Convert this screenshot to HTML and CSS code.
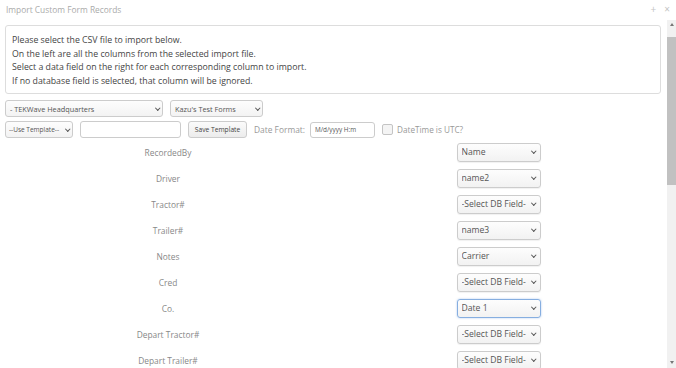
FILE: index.html
```html
<!DOCTYPE html>
<html lang="en">
<head>
  <meta charset="UTF-8" />
  <title>Import Custom Form Records</title>
  <link rel="stylesheet" href="styles.css">
</head>
<body>
  <div class="dialog">
    <div class="titlebar">
      <span class="title">Import Custom Form Records</span>
      <span class="tools"><span>+</span><span>×</span></span>
    </div>
    <div class="content">
      <div class="info">
        Please select the CSV file to import below.<br>
        On the left are all the columns from the selected import file.<br>
        Select a data field on the right for each corresponding column to import.<br>
        If no database field is selected, that column will be ignored.
      </div>
      <div class="toolbar">
        <span class="pick small"><select class="sel-small sel-company"><option>- TEKWave Headquarters</option></select></span>
        <span class="pick small"><select class="sel-small sel-forms"><option>Kazu's Test Forms</option></select></span>
      </div>
      <div class="toolbar">
        <span class="pick small"><select class="sel-small sel-template"><option>--Use Template--</option></select></span>
        <input class="tpl-name" type="text">
        <button class="btn">Save Template</button>
        <span class="fmt-label">Date Format:</span>
        <input class="date-fmt" type="text" value="M/d/yyyy H:m">
        <label class="utc"><span class="check"></span>DateTime is UTC?</label>
      </div>
      <div class="map">
        <div class="col-name">RecordedBy</div>
        <div class="col-field"><span class="pick"><select class="db-field"><option>Name</option></select></span></div>
        <div class="col-name">Driver</div>
        <div class="col-field"><span class="pick"><select class="db-field"><option>name2</option></select></span></div>
        <div class="col-name">Tractor#</div>
        <div class="col-field"><span class="pick"><select class="db-field"><option>-Select DB Field-</option></select></span></div>
        <div class="col-name">Trailer#</div>
        <div class="col-field"><span class="pick"><select class="db-field"><option>name3</option></select></span></div>
        <div class="col-name">Notes</div>
        <div class="col-field"><span class="pick"><select class="db-field"><option>Carrier</option></select></span></div>
        <div class="col-name">Cred</div>
        <div class="col-field"><span class="pick"><select class="db-field"><option>-Select DB Field-</option></select></span></div>
        <div class="col-name">Co.</div>
        <div class="col-field"><span class="pick"><select class="db-field focused"><option>Date 1</option></select></span></div>
        <div class="col-name">Depart Tractor#</div>
        <div class="col-field"><span class="pick"><select class="db-field"><option>-Select DB Field-</option></select></span></div>
        <div class="col-name">Depart Trailer#</div>
        <div class="col-field"><span class="pick"><select class="db-field"><option>-Select DB Field-</option></select></span></div>
      </div>
    </div>
    <div class="scrollbar">
      <span class="arrow up"></span>
      <span class="thumb"></span>
      <span class="arrow down"></span>
    </div>
  </div>
</body>
</html>
```

FILE: styles.css
```css
html, body {
  margin: 0;
  padding: 0;
  background: #fff;
}
body {
  font-family: 'Open Sans', 'Liberation Sans', sans-serif;
  color: #444;
}
.dialog {
  position: relative;
  width: 676px;
  height: 368px;
  overflow: hidden;
}
.titlebar {
  display: flex;
  justify-content: space-between;
  align-items: center;
  height: 18px;
  padding: 0 6px;
}
.title {
  font-size: 8.4px;
  color: #aaa;
}
.tools {
  display: flex;
  gap: 8px;
  font-size: 10px;
  color: #c4c4c4;
}
.content {
  height: 350px;
  overflow: hidden;
  padding: 7px 15px 0 5px;
  box-sizing: border-box;
}
.info {
  border: 1px solid #ddd;
  border-radius: 3px;
  padding: 8px 6px 5px;
  font-size: 8.75px;
  line-height: 13.5px;
  color: #444;
}
.toolbar {
  display: flex;
  align-items: center;
  gap: 7px;
  height: 17px;
  margin-top: 6px;
}
.toolbar + .toolbar {
  margin-top: 4px;
}
select, input, button {
  font-family: inherit;
  box-sizing: border-box;
  margin: 0;
}
select {
  appearance: none;
  -webkit-appearance: none;
  outline: none;
}
.pick {
  position: relative;
  display: inline-block;
}
.pick::after {
  content: "";
  position: absolute;
  right: 5px;
  top: 50%;
  width: 2.5px;
  height: 2.5px;
  margin-top: -3px;
  border-right: 1.3px solid #555;
  border-bottom: 1.3px solid #555;
  transform: rotate(45deg);
  pointer-events: none;
}
.pick.small::after {
  right: 4px;
  margin-top: -2.5px;
}
.sel-small {
  display: block;
  height: 17px;
  font-size: 7.3px;
  color: #555;
  border: 1px solid #ccc;
  border-radius: 3px;
  background: linear-gradient(#fdfdfd, #f3f3f3);
  padding: 0 4px;
}
.sel-company { width: 158px; }
.sel-forms { width: 93px; }
.sel-template {
  width: 68px;
  font-size: 6.5px;
  padding: 0 3px;
}
.tpl-name {
  width: 101px;
  height: 17px;
  border: 1px solid #ccc;
  border-radius: 3px;
}
.btn {
  height: 17px;
  width: 59px;
  padding: 0;
  font-size: 6.7px;
  color: #444;
  border: 1px solid #ccc;
  border-radius: 3px;
  background: linear-gradient(#fbfbfb, #ececec);
}
.fmt-label {
  font-size: 8.4px;
  color: #999;
  margin-right: -2px;
}
.date-fmt {
  width: 65px;
  height: 16px;
  font-size: 6.4px;
  color: #555;
  padding: 0 4px;
  border: 1px solid #ccc;
  border-radius: 3px;
}
.utc {
  display: flex;
  align-items: center;
  gap: 4px;
  font-size: 8.2px;
  color: #999;
}
.check {
  width: 9px;
  height: 9px;
  border: 1px solid #c4c4c4;
  border-radius: 2px;
  background: #f4f4f4;
}
.map {
  display: grid;
  grid-template-columns: 1fr 1fr;
  grid-auto-rows: 26px;
  align-items: center;
  justify-items: center;
  margin-top: 1px;
}
.col-name {
  font-size: 8.4px;
  color: #888;
  padding-right: 2px;
}
.col-field {
  padding-left: 3px;
}
.col-field .pick {
  display: block;
}
.db-field {
  display: block;
  width: 84px;
  height: 19px;
  font-size: 8.6px;
  color: #555;
  padding: 0 4px;
  border: 1px solid #ccc;
  border-radius: 3px;
  background: linear-gradient(#fdfdfd, #f2f2f2);
  box-shadow: 0 1px 1px rgba(0, 0, 0, 0.06);
}
.db-field.focused {
  border-color: #86aee0;
  box-shadow: 0 0 2px rgba(80, 140, 220, 0.5);
}
.scrollbar {
  position: absolute;
  right: 0;
  top: 20px;
  bottom: 0;
  width: 9px;
  background: #f1f1f1;
  display: flex;
  flex-direction: column;
  align-items: center;
}
.arrow {
  width: 0;
  height: 0;
  border-left: 2.5px solid transparent;
  border-right: 2.5px solid transparent;
}
.arrow.up {
  border-bottom: 3px solid #777;
  margin: 3px 0 11px;
}
.arrow.down {
  border-top: 3px solid #777;
  margin: auto 0 4px;
}
.thumb {
  width: 9px;
  height: 148px;
  background: #c1c1c1;
}
```
